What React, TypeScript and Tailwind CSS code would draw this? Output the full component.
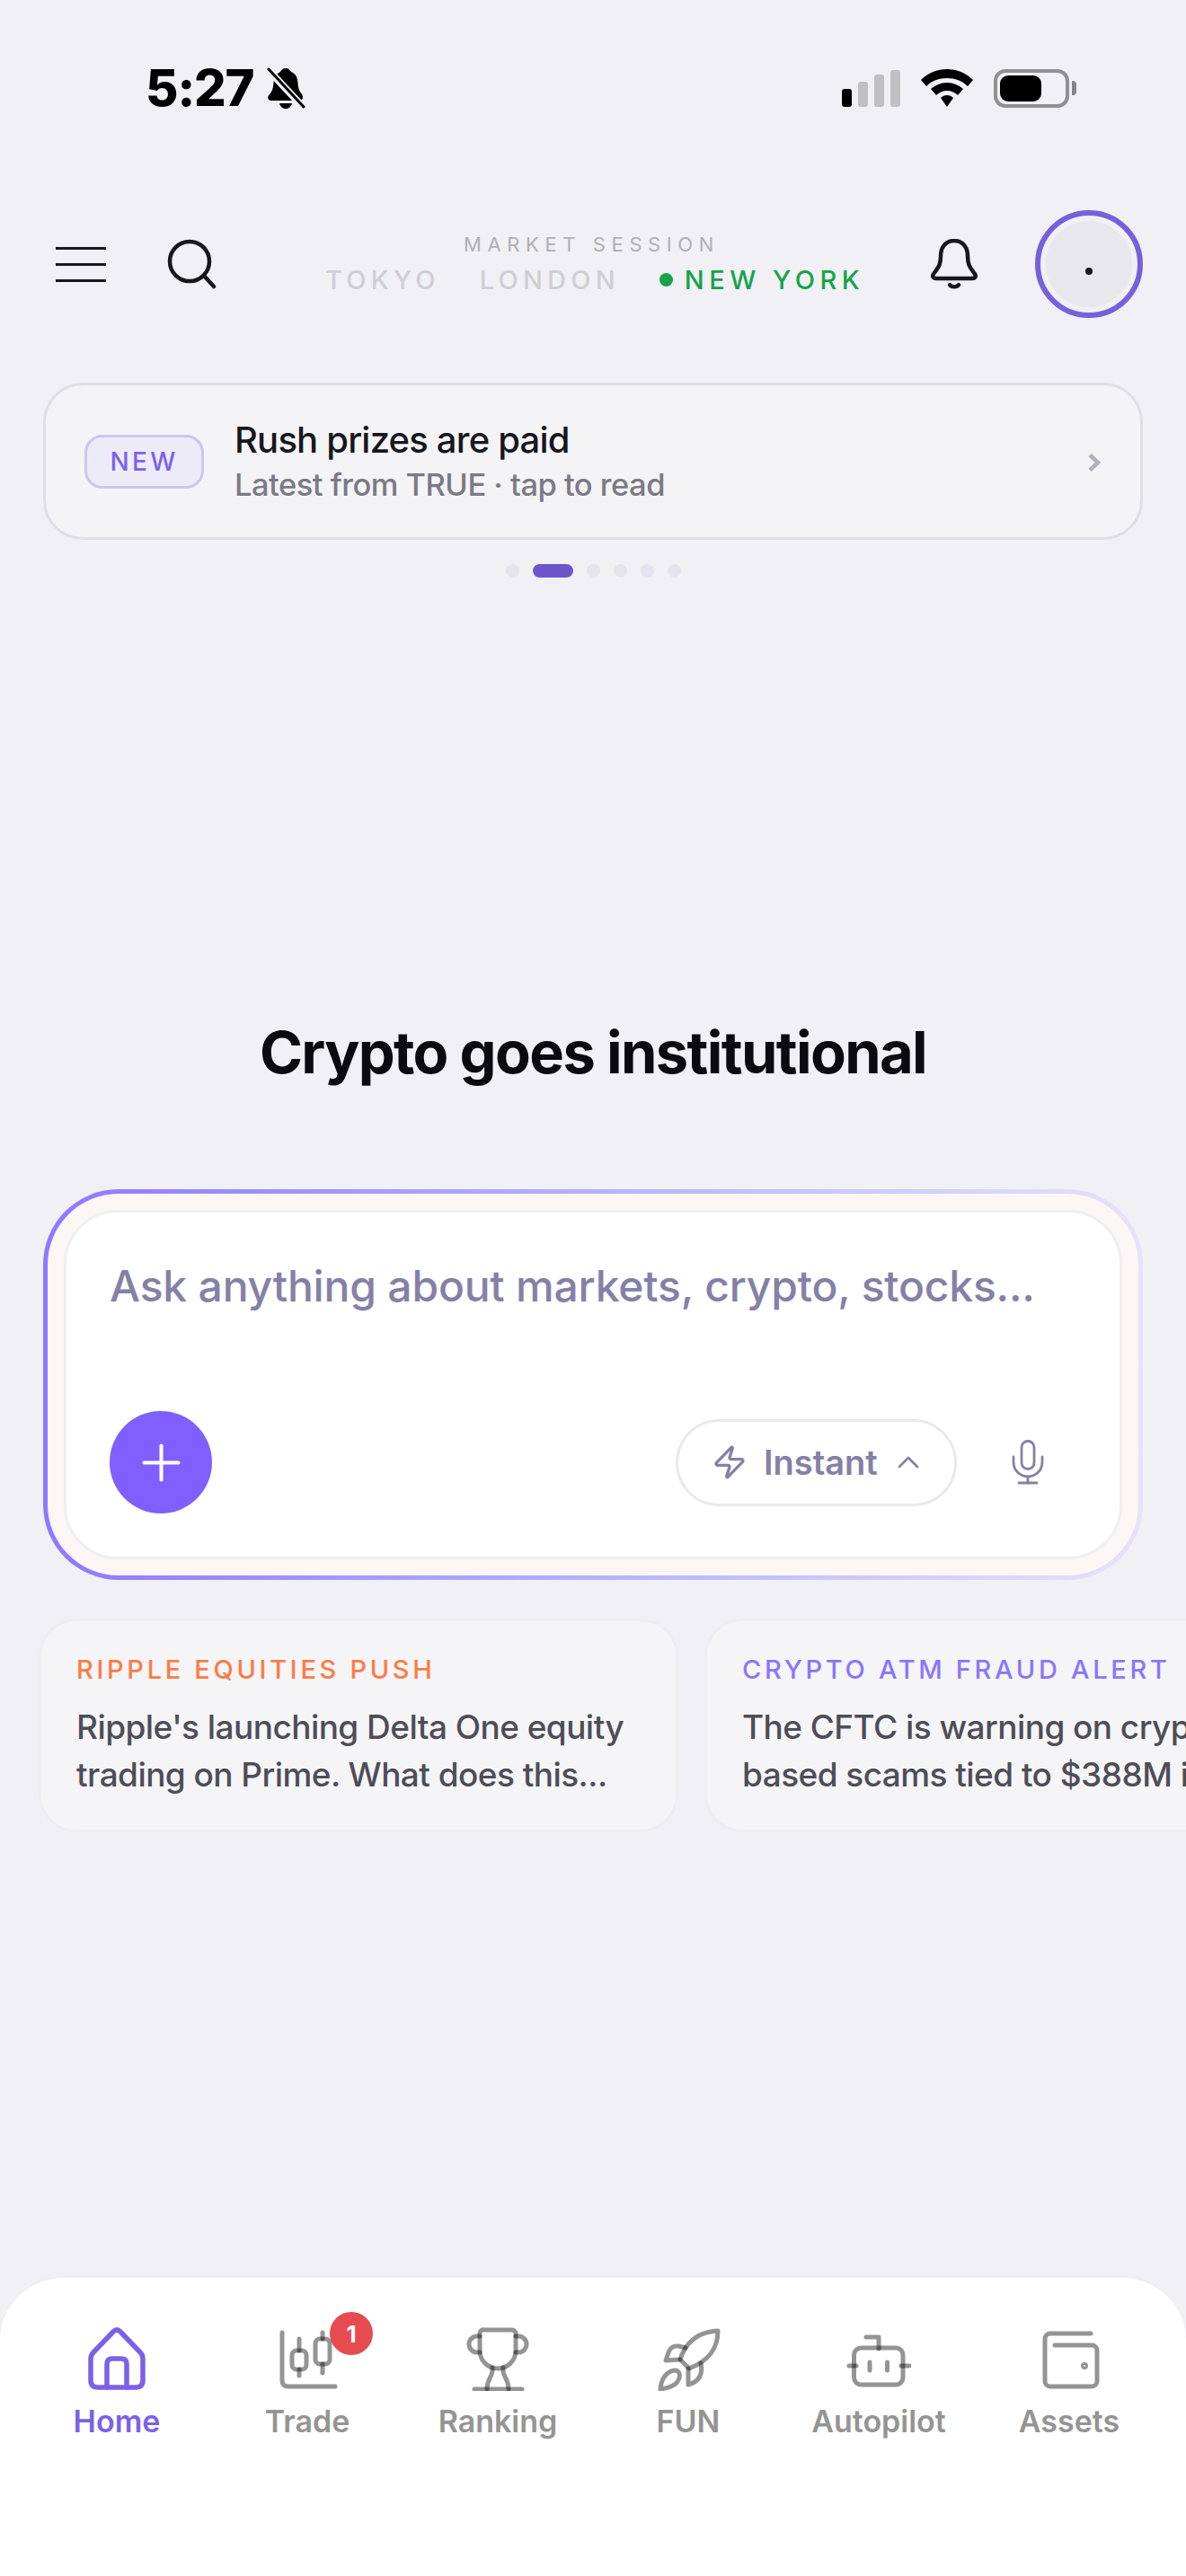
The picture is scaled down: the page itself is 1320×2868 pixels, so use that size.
import { ChevronUp, Plus, Zap } from "lucide-react";

const navStroke = { fill: "none", stroke: "#000", strokeOpacity: 0.42, strokeWidth: 5, strokeLinecap: "round" as const, strokeLinejoin: "round" as const };
const homeStroke = { fill: "none", stroke: "#7b61e8", strokeWidth: 5.5, strokeLinecap: "round" as const, strokeLinejoin: "round" as const };

function HomeIcon() {
  return (
    <svg width="72" height="72" viewBox="0 0 72 72" {...homeStroke}>
      <path d="M32 6 L10 29 Q7 32 7 36 V60 Q7 68 15 68 H57 Q65 68 65 60 V36 Q65 32 62 29 L40 6 Q36 2 32 6 Z" />
      <path d="M25 68 V42 Q25 36 31 36 H41 Q47 36 47 42 V68" />
    </svg>
  );
}

function TradeIcon() {
  return (
    <svg width="72" height="72" viewBox="0 0 72 72" {...navStroke}>
      <path d="M8 7 V60 Q8 67 15 67 H67" />
      <path d="M27 14 V27" />
      <path d="M27 48 V55" />
      <rect x="19" y="27" width="16" height="21" rx="5" />
      <path d="M53 7 V14" />
      <path d="M53 42 V52" />
      <rect x="45" y="14" width="16" height="28" rx="5" />
    </svg>
  );
}

function RankingIcon() {
  return (
    <svg width="72" height="72" viewBox="0 0 72 72" {...navStroke}>
      <path d="M21 4 H52 A4 4 0 0 1 56 8 V27 A20 20 0 0 1 16 27 V8 A4 4 0 0 1 21 4 Z" />
      <path d="M16 11 H13 A9 9 0 0 0 13 29 H16" />
      <path d="M56 11 H59 A9 9 0 0 1 59 29 H56" />
      <path d="M30 46 V50 C30 56 24 58 24 70" />
      <path d="M42 46 V50 C42 56 48 58 48 70" />
      <path d="M10 70 H63" />
    </svg>
  );
}

function FunIcon() {
  return (
    <svg width="72" height="72" viewBox="0 0 72 72" {...navStroke}>
      <path d="M27 37 C34 15 50 6 69 5 C69 24 60 38 37 47 Z" />
      <path d="M33 24 L25 22 Q17 21 14 29 L11 38 L27 37" />
      <path d="M50 41 Q54 60 36 65 V47" />
      <path d="M5 70 C6 58 12 50 21 49 C28 49 28 58 22 64 C17 68 11 69 5 70 Z" />
    </svg>
  );
}

function AutopilotIcon() {
  return (
    <svg width="72" height="72" viewBox="0 0 72 72" {...navStroke}>
      <rect x="8.5" y="24" width="54.5" height="41" rx="8" />
      <path d="M22 12 H36 V25" />
      <path d="M3 44 H11" />
      <path d="M61 44 H70" />
      <path d="M26 40 V49" />
      <path d="M45.5 40 V49" />
    </svg>
  );
}

function AssetsIcon() {
  return (
    <svg width="72" height="72" viewBox="0 0 72 72" {...navStroke}>
      <path d="M60 8 H15 A6 6 0 0 0 9 14 V61 A6 6 0 0 0 15 67 H61 A6 6 0 0 0 67 61 V27 A6 6 0 0 0 61 21 H20" />
      <circle cx="53" cy="44" r="1.5" />
    </svg>
  );
}

const navItems = [
  { label: "Home", Icon: HomeIcon, active: true },
  { label: "Trade", Icon: TradeIcon, badge: "1" },
  { label: "Ranking", Icon: RankingIcon },
  { label: "FUN", Icon: FunIcon },
  { label: "Autopilot", Icon: AutopilotIcon },
  { label: "Assets", Icon: AssetsIcon },
];

const bannerDots = [false, true, false, false, false, false];

function StatusBar() {
  return (
    <div className="flex items-center h-[46px] mt-[75px] pl-[162px] pr-[122px] shrink-0">
      <span className="text-[56px] leading-[46px] font-extrabold tracking-[-0.02em] text-black">5:27</span>
      <svg className="ml-[14px]" width="44" height="46" viewBox="0 0 44 46">
        <path d="M22 1 C25 1 27 3 28 5 C33 7 35 11 35.500 17 C36 24 37 26 40 30 C42 33 41 37 37 37 H6 C2 37 1 33 4 30 C7 27 8 23 8.500 17 C9 11 12 7 16 5 C17 3 19 1 22 1 Z" fill="#000" />
        <path d="M15 40 H29 C28 44 25 46 22 46 C19 46 16 44 15 40 Z" fill="#000" />
        <path d="M1 1 L43 46" stroke="#f1f0f5" strokeWidth="8" />
        <path d="M3 2 L42 44" stroke="#000" strokeWidth="3" strokeLinecap="round" />
      </svg>
      <div className="ml-auto flex items-end gap-[7px] h-[41px]">
        <div className="w-[11px] h-[20px] rounded-[3px] bg-black" />
        <div className="w-[11px] h-[28px] rounded-[3px] bg-[#c0c0c2]" />
        <div className="w-[11px] h-[36px] rounded-[3px] bg-[#c0c0c2]" />
        <div className="w-[11px] h-[41px] rounded-[3px] bg-[#c0c0c2]" />
      </div>
      <svg className="ml-[23px]" width="58" height="42" viewBox="0 0 58 42">
        <path d="M29 0 C40 0 50 4 58 12 L52 19 C46 13 38 10 29 10 C20 10 12 13 6 19 L0 12 C8 4 18 0 29 0 Z" fill="#000" />
        <path d="M29 15 C36 15 42 18 47 22 L41 29 C38 26 34 24 29 24 C24 24 20 26 17 29 L11 22 C16 18 22 15 29 15 Z" fill="#000" />
        <path d="M29 29 C32 29 34 30 36 32 L29 42 L22 32 C24 30 26 29 29 29 Z" fill="#000" />
      </svg>
      <div className="ml-[23px] flex items-center">
        <div className="w-[84px] h-[43px] rounded-[13px] border-[4px] border-[#909092] p-[3px]">
          <div className="w-[46px] h-full rounded-[9px] bg-black" />
        </div>
        <div className="ml-[3px] w-[5px] h-[16px] rounded-r-[4px] bg-[#858587]" />
      </div>
    </div>
  );
}

function Header() {
  return (
    <div className="flex items-center mt-[113px] pl-[62px] shrink-0">
      <div className="flex flex-col gap-[15px] w-[56px]">
        <div className="h-[3px] bg-[#17171c]" />
        <div className="h-[3px] bg-[#17171c]" />
        <div className="h-[3px] bg-[#17171c]" />
      </div>
      <svg className="ml-[68px]" width="56" height="56" viewBox="0 0 56 56" fill="none" stroke="#17171c" strokeWidth="4.500" strokeLinecap="round">
        <circle cx="25" cy="25" r="22" />
        <path d="M41 41 L52 53" />
      </svg>
      <div className="ml-[120px] w-[593px] flex flex-col items-center">
        <div className="text-[22px] leading-[24px] tracking-[0.3em] text-[#b0aeb8]">MARKET SESSION</div>
        <div className="mt-[11px] flex items-center w-full text-[29px] leading-[34px] font-medium tracking-[0.18em] whitespace-nowrap">
          <span className="text-[#cfced4]">TOKYO</span>
          <span className="ml-[44px] text-[#cfced4]">LONDON</span>
          <span className="ml-[44px] w-[15px] h-[15px] shrink-0 rounded-full bg-[#16a34a]" />
          <span className="ml-[13px] tracking-[0.19em] text-[#16a34a]">NEW YORK</span>
        </div>
      </div>
      <svg className="ml-[80px]" width="54" height="56" viewBox="0 0 54 56" fill="none" stroke="#17171c" strokeWidth="4.500" strokeLinecap="round" strokeLinejoin="round">
        <path d="M27 2 C37 2 42 10 42 19 C42 30 45 32 50 39 C52 42 50 44 47 44 H7 C4 44 2 42 4 39 C9 32 12 30 12 19 C12 10 17 2 27 2 Z" />
        <path d="M22 51 C24 54 30 54 32 51" />
      </svg>
      <div className="ml-[63px] w-[120px] h-[120px] rounded-full border-[6px] border-[#7660db] p-[6px]">
        <div className="w-full h-full rounded-full bg-[#e8e7ec] flex items-center justify-center">
          <div className="w-[8px] h-[8px] mt-[16px] rounded-full bg-[#17171c]" />
        </div>
      </div>
    </div>
  );
}

function Banner() {
  return (
    <div className="mt-[72px] mx-[48px] h-[175px] shrink-0 flex items-center rounded-[44px] border-[3px] border-[#dfdde6] bg-[#f4f4f7] pl-[43px] pr-[44px]">
      <div className="w-[133px] h-[60px] rounded-[20px] border-[3px] border-[#cdc5ee] bg-[#eeebf8] flex items-center justify-center text-[28px] font-medium tracking-[0.12em] text-[#7b61ee]">
        NEW
      </div>
      <div className="ml-[34px]">
        <div className="mb-[4px] text-[40px] leading-[48px] font-medium tracking-[-0.02em] text-[#17171c]">Rush prizes are paid</div>
        <div className="text-[34.5px] leading-[44px] font-medium tracking-[-0.015em] text-[#7b7a85]">Latest from TRUE · tap to read</div>
      </div>
      <svg className="ml-auto mt-[3px]" width="14" height="20" viewBox="0 0 14 20" fill="none" stroke="#b0afba" strokeWidth="4.500">
        <path d="M2 1.500 L11 10 L2 18.500" />
      </svg>
    </div>
  );
}

export default function App() {
  return (
    <div className="relative w-[1320px] h-[2868px] overflow-hidden flex flex-col bg-[#f1f0f5] [font-family:Inter,sans-serif]">
      <StatusBar />
      <Header />
      <Banner />

      <div className="mt-[27px] flex justify-center gap-[15px] pl-[1px] shrink-0">
        {bannerDots.map((active, i) => (
          <div key={i} className={active ? "w-[45px] h-[15px] rounded-full bg-[#6d56cc]" : "w-[15px] h-[15px] rounded-full bg-[#e5e4ee]"} />
        ))}
      </div>

      <h1 className="mt-[493px] text-center text-[65px] leading-[72px] font-bold tracking-[-0.025em] text-[#0b0b0f] shrink-0">
        Crypto goes institutional
      </h1>

      <div className="mt-[116px] mx-[48px] h-[435px] shrink-0 rounded-[84px] p-[5px] bg-gradient-to-r from-[#8f78ff] to-[#e6e3f8]">
        <div className="h-full rounded-[79px] bg-[#faf7f4] p-[18px]">
          <div className="h-full rounded-[60px] border-[3px] border-[#efefef] bg-white flex flex-col justify-between pl-[48px] pr-[84px] pt-[52px] pb-[48px]">
            <div className="text-[48px] leading-[60px] font-medium tracking-[-0.004em] text-[#8580a6]">
              Ask anything about markets, crypto, stocks...
            </div>
            <div className="flex items-center">
              <div className="w-[114px] h-[114px] rounded-full bg-[#7f5fff] flex items-center justify-center">
                <Plus className="text-white" size={65} strokeWidth={1.5} />
              </div>
              <div className="ml-auto w-[313px] h-[97px] rounded-full border-[3px] border-[#e9e9e9] flex items-center pl-[37px] text-[#8580a6]">
                <Zap size={40} strokeWidth={2} />
                <span className="ml-[18px] text-[38px] font-semibold">Instant</span>
                <ChevronUp className="ml-[14px]" size={40} strokeWidth={1.6} />
              </div>
              <svg className="ml-[61px]" width="36" height="50" viewBox="0 0 36 50" fill="none" stroke="#8580a6" strokeWidth="2.800" strokeLinecap="round">
                <rect x="11" y="1.500" width="14" height="31" rx="7" />
                <path d="M2 19 V25 A16 16 0 0 0 34 25 V19" />
                <path d="M18 41 V48" />
                <path d="M8 48 H28" />
              </svg>
            </div>
          </div>
        </div>
      </div>

      <div className="mt-[43px] pl-[43px] flex gap-[29px] shrink-0 w-[1600px]">
        <div className="w-[712px] h-[238px] rounded-[42px] border-[3px] border-[#eeeef2] bg-[#f5f5f8] pl-[39px] pt-[38px]">
          <div className="text-[29px] leading-[32px] font-medium tracking-[0.127em] text-[#ff7a45]">RIPPLE EQUITIES PUSH</div>
          <div className="mt-[21px] text-[37px] leading-[53px] font-medium tracking-[-0.015em] text-[#4e4d57]">
            Ripple's launching Delta One equity
            <br />
            trading on Prime. What does this...
          </div>
        </div>
        <div className="w-[712px] h-[238px] rounded-[42px] border-[3px] border-[#eeeef2] bg-[#f5f5f8] pl-[39px] pt-[38px]">
          <div className="text-[29px] leading-[32px] font-medium tracking-[0.127em] text-[#8b74ff]">CRYPTO ATM FRAUD ALERT</div>
          <div className="mt-[21px] text-[37px] leading-[53px] font-medium tracking-[-0.015em] text-[#4e4d57] whitespace-nowrap">
            The CFTC is warning on crypto ATM
            <br />
            based scams tied to $388M in losses
          </div>
        </div>
      </div>

      <nav className="mt-auto h-[335px] shrink-0 rounded-t-[72px] border-t-[3px] border-[#efeff2] bg-white px-[24px] pt-[54px] grid grid-cols-6">
        {navItems.map(({ label, Icon, active, badge }) => (
          <div key={label} className="flex flex-col items-center">
            <div className="relative w-[72px] h-[72px]">
              <Icon />
              {badge && (
                <div className="absolute left-[61px] top-[-16px] w-[48px] h-[48px] rounded-full bg-[#e64b50] flex items-center justify-center text-[26px] font-bold text-white">
                  {badge}
                </div>
              )}
            </div>
            <div className={active ? "mt-[14px] text-[34px] leading-[40px] font-semibold text-[#7b61e8]" : "mt-[14px] text-[34px] leading-[40px] font-semibold text-[#949494]"}>
              {label}
            </div>
          </div>
        ))}
      </nav>
    </div>
  );
}
